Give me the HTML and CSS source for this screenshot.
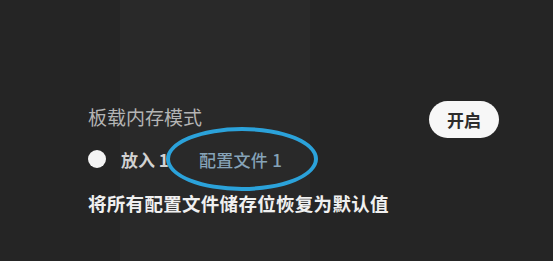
FILE: index.html
```html
<!DOCTYPE html>
<html>
<head>
  <title>板载内存模式</title>
  <link rel="stylesheet" href="styles.css">
</head>
<body>
  <!-- faint device silhouette behind the settings -->
  <div class="backdrop"></div>

  <div class="panel">
    <div class="row-mode">
      <span class="label">板载内存模式</span>
      <button class="pill">开启</button>
    </div>

    <div class="row-slot">
      <span class="dot"></span>
      <span class="slot-text">放入 1</span>
      <span class="profile">
        配置文件 1
        <span class="ring"></span>
      </span>
    </div>

    <div class="reset">将所有配置文件储存位恢复为默认值</div>
  </div>
</body>
</html>
```

FILE: styles.css
```css
body {
  margin: 0;
  width: 553px;
  height: 261px;
  overflow: hidden;
  background: #252525;
  font-family: "Noto Sans CJK SC", "Noto Sans", sans-serif;
  position: relative;
}

.backdrop {
  position: absolute;
  left: 120px;
  top: 0;
  width: 190px;
  height: 261px;
  background: #292929;
}

.panel {
  position: relative;
  padding: 101px 54px 0 88px;
}

.row-mode {
  display: flex;
  justify-content: space-between;
  align-items: center;
  height: 37px;
}

.label {
  color: #b4b4b4;
  font-size: 19px;
  line-height: 1;
  margin-bottom: 7px;
}

.pill {
  width: 70px;
  height: 37px;
  border: none;
  border-radius: 19px;
  background: #f7f7f7;
  color: #2c2c2c;
  font-family: inherit;
  font-size: 17px;
  font-weight: bold;
  padding: 0;
}

.row-slot {
  display: flex;
  align-items: center;
  height: 42px;
}

.dot {
  width: 18px;
  height: 18px;
  border-radius: 50%;
  background: #f4f4f4;
}

.slot-text {
  color: #d2d2d2;
  font-size: 17px;
  font-weight: bold;
  margin-left: 15px;
}

.profile {
  position: relative;
  color: #86a3b8;
  font-size: 17px;
  font-weight: 500;
  margin-left: 30px;
  letter-spacing: 0.3px;
}

.ring {
  position: absolute;
  left: -33px;
  top: -20px;
  width: 144px;
  height: 56px;
  border: 4px solid #2ba2da;
  border-radius: 50%;
}

.reset {
  color: #f0f0f0;
  font-size: 18.5px;
  font-weight: bold;
  margin-top: 10px;
  letter-spacing: 0.3px;
}
```
